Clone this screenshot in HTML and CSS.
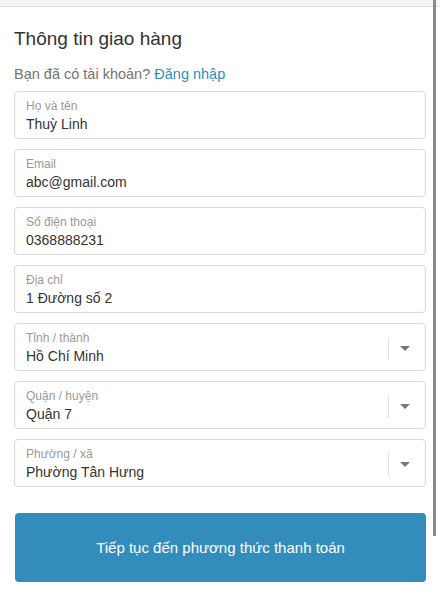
FILE: index.html
```html
<!DOCTYPE html>
<html lang="vi">
<head>
  <meta charset="UTF-8" />
  <meta name="viewport" content="width=device-width, initial-scale=1.0"/>
  <title>Thông tin giao hàng</title>
  <link rel="stylesheet" href="styles.css">
</head>
<body>

  <div class="topbar"></div>

  <div class="main">
    <h2 class="section-title">Thông tin giao hàng</h2>
    <p class="login-hint">Bạn đã có tài khoản? <a href="#">Đăng nhập</a></p>

    <div class="fields">
      <div class="field">
        <label>Họ và tên</label>
        <div class="value">Thuỳ Linh</div>
      </div>
      <div class="field">
        <label>Email</label>
        <div class="value">abc@gmail.com</div>
      </div>
      <div class="field">
        <label>Số điện thoại</label>
        <div class="value">0368888231</div>
      </div>
      <div class="field">
        <label>Địa chỉ</label>
        <div class="value">1 Đường số 2</div>
      </div>
      <div class="field select">
        <div class="field-text">
          <label>Tỉnh / thành</label>
          <div class="value">Hồ Chí Minh</div>
        </div>
        <span class="caret"></span>
      </div>
      <div class="field select">
        <div class="field-text">
          <label>Quận / huyện</label>
          <div class="value">Quận 7</div>
        </div>
        <span class="caret"></span>
      </div>
      <div class="field select">
        <div class="field-text">
          <label>Phường / xã</label>
          <div class="value">Phường Tân Hưng</div>
        </div>
        <span class="caret"></span>
      </div>
    </div>

    <button class="continue-btn">Tiếp tục đến phương thức thanh toán</button>
  </div>

  <div class="scroll-thumb"></div>

</body>
</html>
```

FILE: styles.css
```css
* {
  margin: 0;
  padding: 0;
  box-sizing: border-box;
}

body {
  font-family: "Liberation Sans", Arial, sans-serif;
  background-color: #fff;
  color: #333;
  position: relative;
  min-height: 600px;
}

.topbar {
  height: 7px;
  background-color: #f4f4f4;
  border-bottom: 1px solid #e3e3e3;
}

.main {
  padding: 20px 14px 0 14px;
}

.section-title {
  font-size: 19px;
  font-weight: 400;
  color: #333;
  line-height: 24px;
  margin-bottom: 13px;
}

.login-hint {
  font-size: 14.5px;
  color: #737373;
  line-height: 20px;
  margin-bottom: 7px;
}

.login-hint a {
  color: #338dbc;
  text-decoration: none;
}

.fields {
  display: flex;
  flex-direction: column;
  gap: 10px;
}

.field {
  height: 48px;
  border: 1px solid #d9d9d9;
  border-radius: 4px;
  padding: 6px 12px 0 11px;
}

.field label {
  display: block;
  font-size: 12px;
  line-height: 16px;
  color: #999;
}

.field .value {
  font-size: 14px;
  line-height: 20px;
  color: #333;
}

.field.select {
  display: flex;
  align-items: center;
  padding-right: 0;
}

.field-text {
  flex: 1;
  align-self: flex-start;
}

.caret {
  width: 37px;
  height: 23px;
  border-left: 1px solid #e0e0e0;
  position: relative;
  margin-top: -4px;
}

.caret::after {
  content: "";
  position: absolute;
  left: 11px;
  top: 9px;
  border-left: 5px solid transparent;
  border-right: 5px solid transparent;
  border-top: 5px solid #777;
}

.continue-btn {
  display: block;
  width: 411px;
  margin: 26px 0 0 1px;
  height: 69px;
  background-color: #338dbc;
  color: #fff;
  border: none;
  border-radius: 4px;
  font-family: inherit;
  font-size: 15px;
}

.scroll-thumb {
  position: absolute;
  top: 0;
  left: 433px;
  width: 3px;
  height: 536px;
  background-color: #8a8a8a;
}
```
